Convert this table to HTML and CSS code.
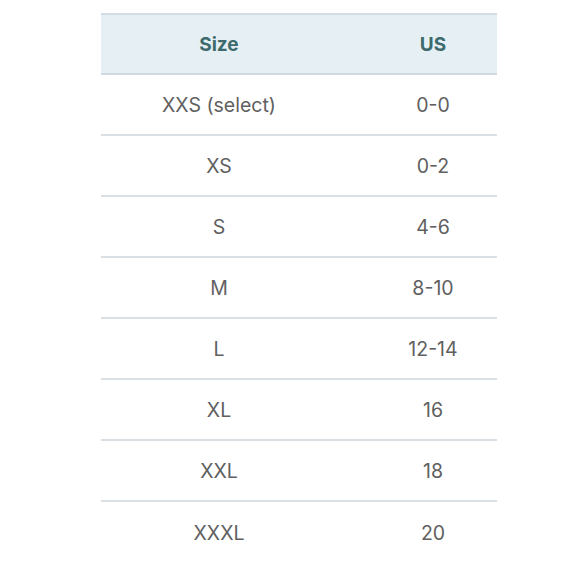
FILE: index.html
```html
<!DOCTYPE html>
<html>
<head>
<meta charset="utf-8">
<link rel="stylesheet" href="styles.css">
</head>
<body>
<div class="chart">
  <div class="row head">
    <div class="c1">Size</div>
    <div class="c2">US</div>
  </div>
  <div class="row"><div class="c1">XXS (select)</div><div class="c2">0-0</div></div>
  <div class="row"><div class="c1">XS</div><div class="c2">0-2</div></div>
  <div class="row"><div class="c1">S</div><div class="c2">4-6</div></div>
  <div class="row"><div class="c1">M</div><div class="c2">8-10</div></div>
  <div class="row"><div class="c1">L</div><div class="c2">12-14</div></div>
  <div class="row"><div class="c1">XL</div><div class="c2">16</div></div>
  <div class="row"><div class="c1">XXL</div><div class="c2">18</div></div>
  <div class="row last"><div class="c1">XXXL</div><div class="c2">20</div></div>
</div>
</body>
</html>
```
FILE: styles.css
```css
html, body {
  margin: 0;
  padding: 0;
  background: #ffffff;
}
body {
  font-family: Inter, "Liberation Sans", sans-serif;
  font-size: 19.5px;
  color: #606060;
}
.chart {
  margin: 13px 0 0 101px;
  width: 396px;
}
.row {
  display: grid;
  grid-template-columns: 236px 1fr;
  align-items: center;
  height: 61px;
  box-sizing: border-box;
  border-bottom: 2px solid #d9dfe3;
}
.row.head {
  height: 62px;
  background: #e6f0f4;
  border-top: 2px solid #d3dde2;
  border-bottom: 2px solid #cfdbe0;
  color: #3d6a6c;
  font-weight: 700;
  font-size: 19px;
}
.row.last {
  border-bottom: none;
}
.c1 {
  text-align: center;
}
.c2 {
  text-align: center;
  padding-left: 32px;
}
```
